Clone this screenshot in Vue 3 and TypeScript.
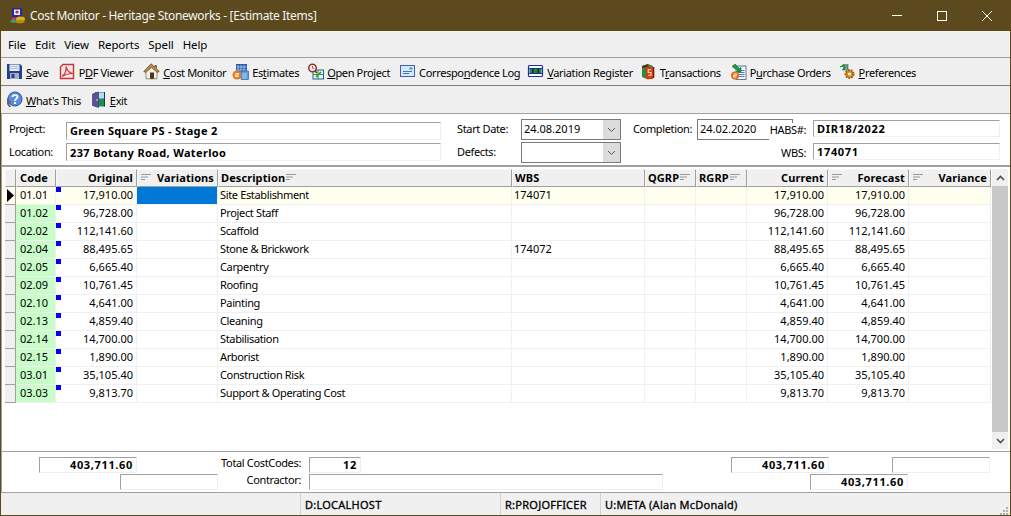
<template>
  <div class="window">
    <header class="titlebar">
      <svg class="appicon" width="17" height="17" viewBox="0 0 17 17">
        <rect x="3" y="1" width="10" height="9" fill="#1c2f9c" />
        <rect x="5" y="2.5" width="6" height="5.5" fill="#e8e8f8" />
        <circle cx="8" cy="5" r="1.6" fill="#d81c28" />
        <path d="M1 15 L4 10 L9 12 L8 16 Z" fill="#d02a8c" />
        <path d="M1 15 L4 12 L7 14 L6 16 Z" fill="#28b04c" />
        <ellipse cx="11.5" cy="12" rx="4.5" ry="2.6" fill="#e2b21c" />
        <ellipse cx="11" cy="14.4" rx="4.5" ry="1.8" fill="#b98a10" />
      </svg>
      <span class="title">Cost Monitor - Heritage Stoneworks - [Estimate Items]</span>
      <div class="winbtns">
        <svg width="12" height="12" viewBox="0 0 12 12"><path d="M1 5.5H11" stroke="#fff" /></svg>
        <svg width="12" height="12" viewBox="0 0 12 12"><rect x="1.5" y="1.5" width="9" height="9" fill="none" stroke="#fff" /></svg>
        <svg width="12" height="12" viewBox="0 0 12 12"><path d="M1 1L11 11M11 1L1 11" stroke="#fff" /></svg>
      </div>
    </header>

    <nav class="menubar">
      <span v-for="m in menus" :key="m">{{ m }}</span>
    </nav>

    <div class="toolbar bar-one">
      <button v-for="b in toolbarOne" :key="b.pre + b.key + b.post" class="tool" :style="{ marginRight: b.gap + 'px' }">
        <svg width="17" height="17" viewBox="0 0 17 17" v-html="icons[b.icon]"></svg>
        <span class="tool-text">{{ b.pre }}<u>{{ b.key }}</u>{{ b.post }}</span>
      </button>
    </div>
    <div class="toolbar bar-two">
      <button v-for="b in toolbarTwo" :key="b.pre + b.key + b.post" class="tool" :style="{ marginRight: b.gap + 'px' }">
        <svg width="17" height="17" viewBox="0 0 17 17" v-html="icons[b.icon]"></svg>
        <span class="tool-text">{{ b.pre }}<u>{{ b.key }}</u>{{ b.post }}</span>
      </button>
    </div>

    <section class="form">
      <div class="col col-project">
        <label class="field">
          <span class="lab lab-up">Project:</span>
          <span class="box strong grow">Green Square PS - Stage 2</span>
        </label>
        <label class="field">
          <span class="lab">Location:</span>
          <span class="box strong grow box-low">237 Botany Road, Waterloo</span>
        </label>
      </div>
      <div class="col col-dates">
        <div class="field">
          <span class="lab lab-date">Start Date:</span>
          <span class="combo">24.08.2019<i class="drop"><svg width="9" height="6" viewBox="0 0 9 6"><path d="M1 1L4.5 4.5L8 1" fill="none" stroke="#555" /></svg></i></span>
        </div>
        <div class="field">
          <span class="lab lab-date">Defects:</span>
          <span class="combo"><i class="drop"><svg width="9" height="6" viewBox="0 0 9 6"><path d="M1 1L4.5 4.5L8 1" fill="none" stroke="#555" /></svg></i></span>
        </div>
      </div>
      <div class="col col-completion">
        <div class="field">
          <span class="lab lab-date">Completion:</span>
          <span class="combo combo-short">24.02.2020</span>
        </div>
      </div>
      <div class="col col-habs">
        <div class="field field-habs">
          <span class="lab lab-right">HABS#:</span>
          <span class="box strong figures box-small grow">DIR18/2022</span>
        </div>
        <div class="field field-habs">
          <span class="lab lab-right">WBS:</span>
          <span class="box strong figures box-small grow">174071</span>
        </div>
      </div>
    </section>

    <section class="gridwrap">
      <div class="table">
        <div class="row head">
          <div class="hcell ind"></div>
          <div v-for="c in columns" :key="c.name" class="hcell" :class="c.cls">
            <svg v-if="c.filter === 'left'" class="filter" width="10" height="8" viewBox="0 0 10 8"><path d="M0 1.5H10M0 4H7M0 6.5H4" stroke="#9a9a9a" /></svg>
            <span class="hname">{{ c.name }}</span>
            <svg v-if="c.filter === 'right'" class="filter" width="10" height="8" viewBox="0 0 10 8"><path d="M0 1.5H10M0 4H7M0 6.5H4" stroke="#9a9a9a" /></svg>
          </div>
        </div>
        <div v-for="(r, i) in rows" :key="r.code" class="row data" :class="{ current: i === 0 }">
          <div class="cell ind">
            <svg v-if="i === 0" width="7" height="13" viewBox="0 0 7 13"><path d="M0 0L7 6.5L0 13Z" fill="#000" /></svg>
          </div>
          <div class="cell code">{{ r.code }}</div>
          <div class="cell num orig"><i class="mark"></i>{{ r.original }}</div>
          <div class="cell" :class="{ selected: i === 0 }"></div>
          <div class="cell">{{ r.desc }}</div>
          <div class="cell wbs">{{ r.wbs }}</div>
          <div class="cell"></div>
          <div class="cell"></div>
          <div class="cell num">{{ r.original }}</div>
          <div class="cell num">{{ r.original }}</div>
          <div class="cell"></div>
        </div>
      </div>
      <div class="scrollbar">
        <div class="sbtn"><svg width="9" height="6" viewBox="0 0 9 6"><path d="M1 5L4.5 1.5L8 5" fill="none" stroke="#505050" stroke-width="1.6" /></svg></div>
        <div class="thumb"></div>
        <div class="sbtn"><svg width="9" height="6" viewBox="0 0 9 6"><path d="M1 1L4.5 4.5L8 1" fill="none" stroke="#505050" stroke-width="1.6" /></svg></div>
      </div>
    </section>

    <section class="totals">
      <div class="tot-row">
        <span class="box strong figures num tot-a">403,711.60</span>
        <span class="tot-label tot-label-a">Total CostCodes:</span>
        <span class="box strong figures num tot-count">12</span>
        <span class="box strong figures num tot-current">403,711.60</span>
        <span class="box tot-var"></span>
      </div>
      <div class="tot-row">
        <span class="box tot-b"></span>
        <span class="tot-label">Contractor:</span>
        <span class="box tot-contractor"></span>
        <span class="box strong figures num tot-fore">403,711.60</span>
      </div>
    </section>

    <footer class="status">
      <span class="st st-a"></span>
      <span class="st st-b">D:LOCALHOST</span>
      <span class="st st-c">R:PROJOFFICER</span>
      <span class="st st-d">U:META (Alan McDonald)</span>
      <svg class="grip" width="10" height="10" viewBox="0 0 10 10" fill="#b0b0b0">
        <rect x="7" y="1" width="2" height="2" /><rect x="4" y="4" width="2" height="2" /><rect x="7" y="4" width="2" height="2" />
        <rect x="1" y="7" width="2" height="2" /><rect x="4" y="7" width="2" height="2" /><rect x="7" y="7" width="2" height="2" />
      </svg>
    </footer>
  </div>
</template>

<script setup lang="ts">
interface ToolButton {
  pre: string
  key: string
  post: string
  icon: string
  gap: number
}

interface Column {
  name: string
  cls: string
  filter?: 'left' | 'right'
}

interface CostRow {
  code: string
  original: string
  desc: string
  wbs: string
}

const menus: string[] = ['File', 'Edit', 'View', 'Reports', 'Spell', 'Help']

const toolbarOne: ToolButton[] = [
  { pre: '', key: 'S', post: 'ave', icon: 'save', gap: 10 },
  { pre: 'P', key: 'D', post: 'F Viewer', icon: 'pdf', gap: 10 },
  { pre: '', key: 'C', post: 'ost Monitor', icon: 'house', gap: 6 },
  { pre: 'Es', key: 't', post: 'imates', icon: 'estimates', gap: 8 },
  { pre: '', key: 'O', post: 'pen Project', icon: 'open', gap: 9 },
  { pre: 'Correspo', key: 'n', post: 'dence Log', icon: 'letter', gap: 7 },
  { pre: '', key: 'V', post: 'ariation Register', icon: 'variation', gap: 7 },
  { pre: 'T', key: 'r', post: 'ansactions', icon: 'book', gap: 9 },
  { pre: 'P', key: 'u', post: 'rchase Orders', icon: 'purchase', gap: 8 },
  { pre: '', key: 'P', post: 'references', icon: 'prefs', gap: 0 },
]

const toolbarTwo: ToolButton[] = [
  { pre: '', key: 'W', post: "hat's This", icon: 'help', gap: 9 },
  { pre: '', key: 'E', post: 'xit', icon: 'exit', gap: 0 },
]

const icons: Record<string, string> = {
  save: `<path d="M1 1H14L16 3V16H1Z" fill="#27408b"/><rect x="3.5" y="1.5" width="10" height="6.5" fill="#e6ebf6"/><path d="M4.5 3.5H12.5M4.5 5.5H12.5" stroke="#b4bfd8"/><rect x="4" y="10" width="9" height="6" fill="#a3afcb"/><rect x="5.5" y="11" width="3" height="4" fill="#27408b"/>`,
  pdf: `<path d="M4 1.5H14.5V15.5H1.5V4Z" fill="#fae6e6" stroke="#c8323c" stroke-width="1.4"/><path d="M3 13.5C6 11 7.5 7 7 3.5C8 7 10 10 14 10.5C10 10.5 6 11.5 3 13.5Z" fill="none" stroke="#d23a44" stroke-width="1.2"/>`,
  house: `<path d="M0.8 8.5L8 0.8L12 4V2.5H13.5V5.5L16.2 8.5L14 9.5L8.5 4.5L3 9.5Z" fill="#b98a45" stroke="#5e421a" stroke-width=".7"/><path d="M3 9.3L8.5 4.6L14 9.3V15.8H3Z" fill="#f6f2e6" stroke="#6e6048" stroke-width=".7"/><rect x="7" y="9.5" width="4" height="6.3" fill="#4e3618"/>`,
  estimates: `<rect x="4" y="1" width="11" height="10" fill="#2c5aa8"/><path d="M6 2V10M9 2V10M12 2V10M4.5 4H14.5M4.5 7H14.5" stroke="#9cc0ea"/><rect x="9" y="8" width="7.5" height="8.5" fill="#5a9be0" stroke="#1f4f96" stroke-width=".6"/><path d="M10.5 11H15M10.5 13H15M10.5 15H15" stroke="#e8f2fc" stroke-dasharray="1.2 .8"/><circle cx="5" cy="12" r="4.5" fill="#ea7a1e"/><path d="M3.5 10.5H6.5V12H3.5V13.5H6.5" fill="none" stroke="#fff"/>`,
  open: `<rect x="6" y="7" width="10.5" height="9" fill="#e8f4ea" stroke="#1e5ea8"/><path d="M6 11.5H16.5M11 7V16" stroke="#1e9a42"/><path d="M9 14L14 9" stroke="#2c9a3c" stroke-width="1.6"/><circle cx="5.5" cy="5" r="3.8" fill="#f4efe6" stroke="#a02a2a" stroke-width="1.5"/><path d="M8 8L10 10" stroke="#7a2222" stroke-width="1.6"/><path d="M5.5 3V5.3H7.4" fill="none" stroke="#555" stroke-width=".7"/>`,
  letter: `<rect x="1.5" y="2.5" width="14" height="11" fill="#d8e8f8" stroke="#3b62a8"/><rect x="10.5" y="4.5" width="3" height="2" fill="#3e8ee0"/><path d="M4 8.5H13M4 10.5H10" stroke="#2e7ad2"/>`,
  variation: `<rect x="1.5" y="2.5" width="14" height="11" rx="1" fill="#fff" stroke="#1c2fb0" stroke-width="1.2"/><path d="M1.5 5.5H15.5M1.5 10.5H15.5" stroke="#1c2fb0" stroke-width="1.2"/><rect x="2.5" y="6" width="12" height="4" fill="#1d8a34"/><rect x="5" y="6" width="1.5" height="4" fill="#0a3010"/><rect x="10.5" y="6" width="1.5" height="4" fill="#0a3010"/>`,
  book: `<path d="M2 3L8 1L13 3V15L8 16.5L2 14Z" fill="#2e8b3a"/><path d="M2 3L8 1L8.5 3.5L2 5Z" fill="#6a2a1a"/><rect x="6" y="4" width="7" height="12" fill="#d9361c"/><rect x="13" y="4" width="1.3" height="11" fill="#7a1c10"/><path d="M11.2 6.8H8.2V9.5H11V12.2H8" fill="none" stroke="#ffe9a0" stroke-width="1.1"/>`,
  purchase: `<rect x="6" y="3" width="10" height="13.5" fill="#f4f6fc" stroke="#3d5a98" stroke-width=".8"/><path d="M8 7.5H14.5M8 9.5H14.5M8 11.5H14.5M8 13.5H14.5" stroke="#5a78b8"/><path d="M2 3.5L5 1L9.5 5.5L11 4V9H6L7.5 7.5Z" fill="#1a9a3e" stroke="#0b6a26" stroke-width=".5"/><circle cx="5" cy="12.5" r="4" fill="#ea6e1a"/><path d="M3.6 11H6.4V12.5H3.6V14H6.4" fill="none" stroke="#fff" stroke-width=".9"/>`,
  prefs: `<path d="M1 4L5 1L7 3.5L9 1V7H3L5 5L3.5 3.5Z" fill="#169a3c" stroke="#0b6a26" stroke-width=".5"/><rect x="6" y="1" width="2.5" height="6" fill="#8a8e92"/><circle cx="10.5" cy="11" r="4" fill="#d98a1e" stroke="#9a5c10" stroke-dasharray="1.6 1.2" stroke-width="2"/><circle cx="10.5" cy="11" r="1.6" fill="#f0f0f0"/>`,
  help: `<circle cx="9" cy="8" r="7" fill="#5b8edb" stroke="#2450a8"/><path d="M6.5 6C6.5 3.5 11.5 3.5 11.5 6C11.5 8 9 7.8 9 10" fill="none" stroke="#fff" stroke-width="1.8"/><rect x="8" y="11" width="2" height="2" fill="#fff"/><path d="M1 7L5 11L3 12.5L5 16H3L1 13Z" fill="#5f636f"/>`,
  exit: `<rect x="5" y="1" width="9.5" height="14.5" fill="#1d8f4a"/><rect x="6" y="1.5" width="8" height="6" fill="#b8d8f4"/><path d="M2.5 3L8.5 1V16.5L2.5 14.5Z" fill="#5e4f9e" stroke="#352b70" stroke-width=".6"/><rect x="6.5" y="8" width="1" height="2" fill="#e8e2b0"/><rect x="14" y="1" width="1" height="14.5" fill="#2b2f58"/>`,
}

const columns: Column[] = [
  { name: 'Code', cls: 'h-code' },
  { name: 'Original', cls: 'h-right' },
  { name: 'Variations', cls: 'h-right h-split', filter: 'left' },
  { name: 'Description', cls: '', filter: 'right' },
  { name: 'WBS', cls: '' },
  { name: 'QGRP', cls: '', filter: 'right' },
  { name: 'RGRP', cls: '', filter: 'right' },
  { name: 'Current', cls: 'h-right' },
  { name: 'Forecast', cls: 'h-right h-split', filter: 'left' },
  { name: 'Variance', cls: 'h-right h-split', filter: 'left' },
]

const rows: CostRow[] = [
  { code: '01.01', original: '17,910.00', desc: 'Site Establishment', wbs: '174071' },
  { code: '01.02', original: '96,728.00', desc: 'Project Staff', wbs: '' },
  { code: '02.02', original: '112,141.60', desc: 'Scaffold', wbs: '' },
  { code: '02.04', original: '88,495.65', desc: 'Stone & Brickwork', wbs: '174072' },
  { code: '02.05', original: '6,665.40', desc: 'Carpentry', wbs: '' },
  { code: '02.09', original: '10,761.45', desc: 'Roofing', wbs: '' },
  { code: '02.10', original: '4,641.00', desc: 'Painting', wbs: '' },
  { code: '02.13', original: '4,859.40', desc: 'Cleaning', wbs: '' },
  { code: '02.14', original: '14,700.00', desc: 'Stabilisation', wbs: '' },
  { code: '02.15', original: '1,890.00', desc: 'Arborist', wbs: '' },
  { code: '03.01', original: '35,105.40', desc: 'Construction Risk', wbs: '' },
  { code: '03.03', original: '9,813.70', desc: 'Support & Operating Cost', wbs: '' },
]
</script>

<style scoped>
.window {
  width: 1011px;
  height: 516px;
  box-sizing: border-box;
  display: flex;
  flex-direction: column;
  border: 1px solid #5c4a1e;
  border-top: 0;
  background: #fff;
  color: #000;
  font-family: 'Noto Sans', 'Liberation Sans', sans-serif;
  font-size: 11px;
  letter-spacing: -0.35px;
  overflow: hidden;
}
.titlebar {
  height: 31px;
  flex: none;
  margin: 0 -1px;
  background: #5c4a1e;
  color: #f4f4f0;
  display: flex;
  align-items: center;
  padding-left: 9px;
  font-size: 12px;
  letter-spacing: -0.32px;
}
.appicon {
  margin-right: 4px;
}
.title {
  flex: 1;
}
.winbtns {
  display: flex;
  gap: 33px;
  margin-right: 18px;
}
.menubar {
  height: 27px;
  flex: none;
  box-sizing: border-box;
  background: #f0f0f0;
  border-bottom: 1px solid #a0a0a0;
  display: flex;
  align-items: center;
  gap: 9px;
  padding-left: 7px;
  font-size: 11.5px;
  letter-spacing: -0.1px;
}
.toolbar {
  flex: none;
  height: 28px;
  box-sizing: border-box;
  background: #f0f0f0;
  display: flex;
  align-items: center;
  padding-left: 5px;
}
.bar-one {
  border-bottom: 1px solid #808080;
}
.bar-two {
  border-bottom: 1px solid #a0a0a0;
}
.tool {
  all: unset;
  display: flex;
  align-items: center;
  gap: 3px;
}
.tool-text {
  padding-top: 2px;
}
.form {
  height: 53px;
  flex: none;
  box-sizing: border-box;
  display: flex;
  border-bottom: 2px solid #a0a0a0;
  border-left: 1px solid #a0a0a0;
  padding: 5px 0 0 7px;
}
.col {
  display: flex;
  flex-direction: column;
}
.col-project {
  width: 432px;
  margin-top: 2px;
  gap: 3px;
}
.col-dates {
  width: 164px;
  margin-left: 16px;
  gap: 2px;
}
.col-completion {
  width: 160px;
  margin-left: 12px;
}
.col-habs {
  width: 231px;
  margin-left: -24px;
  margin-top: 1px;
  position: relative;
}
.field {
  display: flex;
  align-items: center;
}
.field-habs {
  height: 24px;
  align-items: flex-start;
}
.lab {
  width: 57px;
  flex: none;
  padding-bottom: 2px;
}
.lab-up {
  padding-bottom: 4px;
}
.lab-date {
  width: 64px;
}
.lab-right {
  box-sizing: border-box;
  width: 37px;
  height: 18px;
  margin-top: 3px;
  line-height: 13px;
  margin-right: 7px;
  text-align: right;
  background: #fff;
  white-space: nowrap;
}
.box {
  box-sizing: border-box;
  display: block;
  height: 18px;
  line-height: 15px;
  padding: 0 3px;
  background: #fff;
  border: 1px solid #f0f0f0;
  border-top-color: #a0a0a0;
  border-left-color: #a0a0a0;
}
.box-low {
  line-height: 17px;
}
.box-small {
  height: 17px;
  line-height: 15px;
}
.grow {
  flex: 1;
}
.strong {
  font-weight: 700;
  letter-spacing: 0.35px;
}
.figures {
  letter-spacing: 0.65px;
}
.combo {
  box-sizing: border-box;
  width: 100px;
  height: 21px;
  line-height: 18px;
  padding-left: 2px;
  border: 1px solid #7a7a7a;
  display: flex;
  justify-content: space-between;
  letter-spacing: 0;
}
.combo-short {
  width: 96px;
}
.drop {
  width: 17px;
  margin-left: auto;
  background: #dcdcdc;
  display: flex;
  align-items: center;
  justify-content: center;
}
.gridwrap {
  height: 285px;
  flex: none;
  box-sizing: border-box;
  display: flex;
  padding: 2px 0 0 3px;
  border-bottom: 1px solid #a0a0a0;
  border-left: 1px solid #a0a0a0;
}
.table {
  width: 986px;
  flex: none;
}
.row {
  display: grid;
  grid-template-columns: 11px 40px 81px 81px 294px 133px 51px 51px 81px 81px 82px;
}
.hcell {
  height: 18px;
  box-sizing: border-box;
  background: #f0f0f0;
  border: 1px solid #f8f8f8;
  border-right-color: #a0a0a0;
  border-bottom-color: #a0a0a0;
  display: flex;
  align-items: center;
  gap: 1px;
  padding: 0 2px 2px;
  font-weight: 700;
  letter-spacing: 0.1px;
}
.hcell.ind {
  padding: 0;
}
.h-code {
  padding-left: 3px;
}
.h-right {
  justify-content: flex-end;
  padding-right: 3px;
}
.h-split {
  justify-content: space-between;
  padding-left: 3px;
}
.data .cell {
  height: 18px;
  box-sizing: border-box;
  border-right: 1px solid #f0f0f0;
  border-bottom: 1px solid #f0f0f0;
  line-height: 15px;
  padding: 0 2px;
  position: relative;
  white-space: nowrap;
}
.data .ind {
  background: #f0f0f0;
  border-right: 1px solid #a0a0a0;
  border-bottom: 1px solid #a0a0a0;
  padding: 2px 0 0 2px;
}
.data .code {
  background: #c8fcc8;
  padding-left: 4px;
  letter-spacing: 0;
}
.data .wbs {
  letter-spacing: 0;
}
.num {
  text-align: right;
}
.data .num {
  padding-right: 3px;
  letter-spacing: 0;
}
.current .cell {
  background: #fffff0;
}
.current .code {
  background: #fffff0;
}
.current .selected {
  background: #0078d7;
}
.mark {
  position: absolute;
  left: 0;
  top: 0;
  width: 5px;
  height: 5px;
  background: #0000ff;
}
.scrollbar {
  width: 16px;
  margin-left: 1px;
  height: 280px;
  flex: none;
  display: flex;
  flex-direction: column;
  background: #f0f0f0;
}
.sbtn {
  height: 17px;
  flex: none;
  display: flex;
  align-items: center;
  justify-content: center;
}
.thumb {
  flex: 1;
  background: #c8c8c8;
}
.totals {
  height: 41px;
  flex: none;
  box-sizing: border-box;
  border-bottom: 1px solid #a0a0a0;
  border-left: 1px solid #a0a0a0;
  padding-top: 5px;
  display: flex;
  flex-direction: column;
  gap: 1px;
}
.tot-row {
  display: flex;
  align-items: center;
  height: 16px;
}
.totals .box {
  height: 16px;
  line-height: 14px;
  flex: none;
}
.tot-label {
  text-align: right;
  flex: none;
  width: 83px;
  line-height: 12px;
  height: 16px;
  margin-right: 8px;
  white-space: nowrap;
}
.tot-a {
  width: 98px;
  margin-left: 37px;
}
.tot-label-a {
  margin-left: 81px;
}
.tot-count {
  width: 52px;
}
.tot-current {
  width: 98px;
  margin-left: 370px;
}
.tot-var {
  width: 98px;
  margin-left: 63px;
}
.tot-b {
  width: 98px;
  margin-left: 118px;
}
.tot-contractor {
  width: 354px;
}
.tot-fore {
  width: 98px;
  margin-left: 147px;
}
.status {
  flex: 1;
  background: #f0f0f0;
  display: flex;
  align-items: center;
  position: relative;
  letter-spacing: 0.25px;
  -webkit-text-stroke: 0.3px #000;
}
.st {
  box-sizing: border-box;
  height: 100%;
  line-height: 24px;
  padding-left: 4px;
  border-left: 1px solid #d4d4d4;
  white-space: nowrap;
}
.st-a {
  width: 299px;
  border-left: 0;
}
.st-b {
  width: 200px;
}
.st-c {
  width: 100px;
}
.st-d {
  flex: 1;
}
.grip {
  position: absolute;
  right: 1px;
  bottom: 1px;
}
</style>
